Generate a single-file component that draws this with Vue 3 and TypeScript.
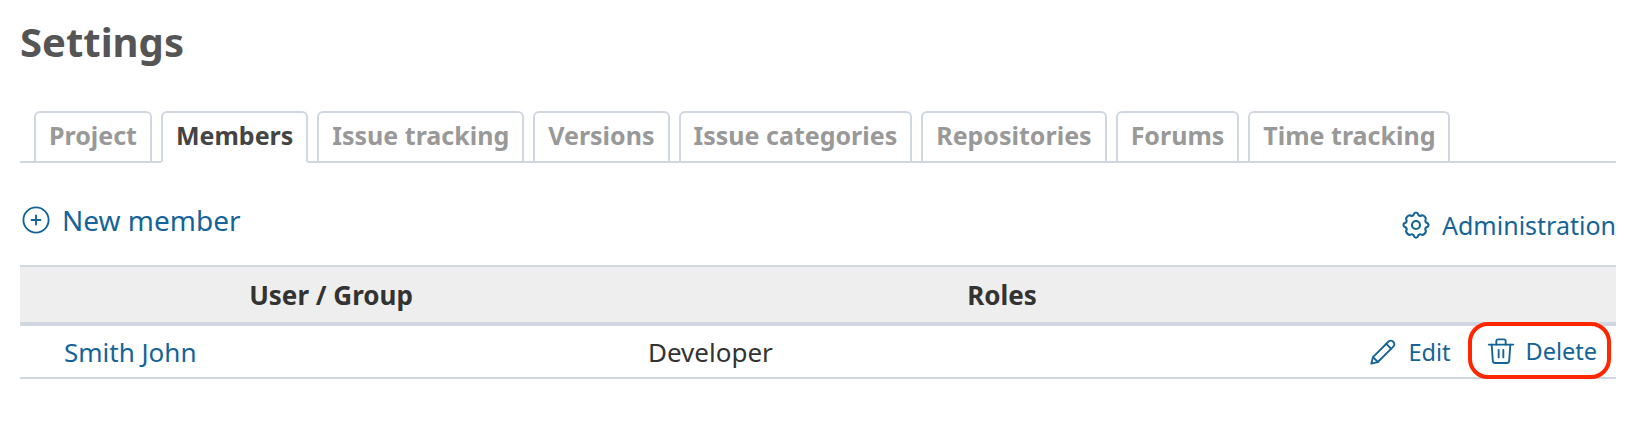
<script setup lang="ts">
const tabs = [
  { label: 'Project' },
  { label: 'Members', selected: true },
  { label: 'Issue tracking' },
  { label: 'Versions' },
  { label: 'Issue categories' },
  { label: 'Repositories' },
  { label: 'Forums' },
  { label: 'Time tracking' },
];
</script>

<template>
  <div class="page">
    <h2 class="title">Settings</h2>

    <div class="tabs">
      <a v-for="tab in tabs" :key="tab.label" class="tab" :class="{ selected: tab.selected }">{{ tab.label }}</a>
    </div>

    <div class="toolbar">
      <a class="link new-member">
        <svg class="icon-new" viewBox="0 0 30 30" fill="none" stroke="currentColor" stroke-width="2">
          <circle cx="15" cy="15" r="13.5" />
          <path d="M15 9.5v11M9.5 15h11" />
        </svg>
        New member
      </a>
      <a class="link admin">
        <svg class="icon-gear" viewBox="0 0 24 24" fill="none" stroke="currentColor" stroke-width="1.7" stroke-linecap="round" stroke-linejoin="round">
          <path d="M10.3 3.3c.4-1.8 3-1.8 3.4 0a1.7 1.7 0 0 0 2.6 1.1c1.5-.9 4.3 1.8 3.4 3.4a1.7 1.7 0 0 0 1 2.5c1.8.5 1.8 3 0 3.4a1.7 1.7 0 0 0-1 2.6c.9 1.5-1.9 4.3-3.4 3.4a1.7 1.7 0 0 0-2.6 1c-.4 1.8-3 1.8-3.4 0a1.7 1.7 0 0 0-2.6-1c-1.5.9-4.3-1.9-3.4-3.4a1.7 1.7 0 0 0-1-2.6c-1.8-.4-1.8-3 0-3.4a1.7 1.7 0 0 0 1-2.5c-.9-1.6 1.9-4.3 3.4-3.4a1.7 1.7 0 0 0 2.6-1.1z" />
          <circle cx="12" cy="12" r="3.2" />
        </svg>
        Administration
      </a>
    </div>

    <table class="list">
      <thead>
        <tr>
          <th class="col-user">User / Group</th>
          <th class="col-roles">Roles</th>
          <th class="col-actions"></th>
        </tr>
      </thead>
      <tbody>
        <tr>
          <td class="user"><a class="link">Smith John</a></td>
          <td class="roles">Developer</td>
          <td class="actions">
            <a class="link action">
              <svg class="icon-action" viewBox="0 0 24 24" fill="none" stroke="currentColor" stroke-width="1.6" stroke-linecap="round" stroke-linejoin="round">
                <path d="M2 22l1.4-5.6L16.8 3a2.6 2.6 0 0 1 3.7 0l.5.5a2.6 2.6 0 0 1 0 3.7L7.6 20.6z" />
                <path d="M14.8 5l4.2 4.2" />
                <path d="M3.4 16.4l4.2 4.2" />
              </svg>
              Edit
            </a>
            <span class="highlight">
              <a class="link action">
                <svg class="icon-action" viewBox="0 0 24 24" fill="none" stroke="currentColor" stroke-width="1.6" stroke-linecap="round" stroke-linejoin="round">
                  <path d="M1.5 6.5h21" />
                  <path d="M8 6.5V3.5A1.5 1.5 0 0 1 9.5 2h5A1.5 1.5 0 0 1 16 3.5v3" />
                  <path d="M4 6.5l1 14a2 2 0 0 0 2 1.8h10a2 2 0 0 0 2-1.8l1-14" />
                  <path d="M10 11v6.5M14 11v6.5" />
                </svg>
                Delete
              </a>
            </span>
          </td>
        </tr>
      </tbody>
    </table>
  </div>
</template>

<style scoped>
.page {
  height: 448px;
  box-sizing: border-box;
  padding: 16px 22px 0 20px;
  background: #fff;
  font-family: "Noto Sans", "Open Sans", sans-serif;
  color: #333;
}

.title {
  margin: 0;
  font-size: 40px;
  line-height: 52px;
  font-weight: 700;
  color: #555;
}

.tabs {
  display: flex;
  gap: 9px;
  margin-top: 43px;
  padding-left: 14px;
  height: 50px;
  border-bottom: 2px solid #d0d7e1;
}

.tab {
  box-sizing: border-box;
  height: 50px;
  padding: 0 13px;
  border: 2px solid #d0d7e1;
  border-bottom: 0;
  border-radius: 6px 6px 0 0;
  font-size: 25px;
  line-height: 44px;
  font-weight: 700;
  color: #999;
}

.tab.selected {
  height: 52px;
  background: #fff;
  border-bottom: 2px solid #fff;
  color: #444;
}

.toolbar {
  display: flex;
  justify-content: space-between;
  height: 102px;
  box-sizing: border-box;
}

.link {
  color: #156499;
  text-decoration: none;
}

.new-member {
  display: flex;
  align-items: center;
  gap: 12px;
  height: 36px;
  margin-top: 39px;
  margin-left: 2px;
  font-size: 28px;
}

.icon-new {
  width: 28px;
  height: 28px;
}

.admin {
  display: flex;
  align-items: center;
  gap: 11px;
  height: 36px;
  margin-top: 44px;
  font-size: 25px;
}

.icon-gear {
  width: 30px;
  height: 30px;
}

.list {
  width: 100%;
  border-collapse: collapse;
  table-layout: fixed;
}

thead tr {
  height: 58px;
  background: #eee;
  border-top: 2px solid #d0d7e1;
  border-bottom: 4px solid #d0d7e1;
}

th {
  padding: 0;
  font-size: 26px;
  font-weight: 700;
  color: #333;
  text-align: center;
}

.col-user {
  width: 622px;
}

.col-roles {
  width: 720px;
}

tbody tr {
  height: 52px;
  border-bottom: 2px solid #d0d7e1;
}

td {
  padding: 0;
  font-size: 26px;
}

.user {
  padding-left: 44px;
}

.roles {
  padding-left: 6px;
  text-align: left;
}

.actions {
  font-size: 23.5px;
  text-align: right;
  white-space: nowrap;
}

.action {
  display: inline-flex;
  align-items: center;
  gap: 11px;
  vertical-align: middle;
}

.icon-action {
  width: 28px;
  height: 28px;
}

.highlight {
  display: inline-flex;
  box-sizing: border-box;
  align-items: center;
  height: 57px;
  margin: -4px 5px -2px 17px;
  padding: 0 10px 0 15px;
  border: 4px solid #ff2600;
  border-radius: 20px;
  vertical-align: middle;
}
</style>
